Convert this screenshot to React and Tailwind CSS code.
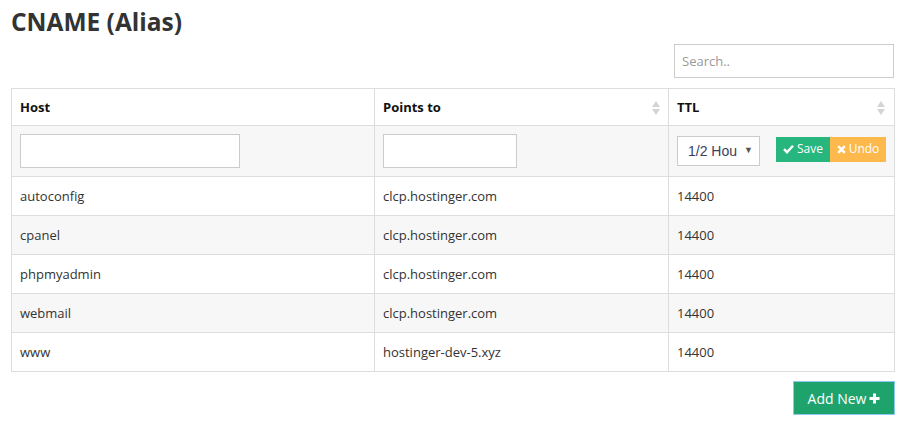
import React from "react";

const rows = [
  ["autoconfig", "clcp.hostinger.com", "14400"],
  ["cpanel", "clcp.hostinger.com", "14400"],
  ["phpmyadmin", "clcp.hostinger.com", "14400"],
  ["webmail", "clcp.hostinger.com", "14400"],
  ["www", "hostinger-dev-5.xyz", "14400"],
];

function SortIcon() {
  return (
    <svg width="8" height="14" viewBox="0 0 8 14" className="shrink-0">
      <path d="M4 0 L8 6 L0 6 Z" fill="#d4d4d4" />
      <path d="M4 14 L8 8 L0 8 Z" fill="#d4d4d4" />
    </svg>
  );
}

export default function App() {
  return (
    <div
      className="w-[906px] h-[426px] bg-white pl-[11px] pr-[12px] text-[#333]"
      style={{ fontFamily: '"Open Sans", sans-serif' }}
    >
      <h1 className="pt-[9px] text-[24.5px] leading-[26px] font-bold text-[#333]">CNAME (Alias)</h1>
      <div className="flex justify-end mt-[9px]">
        <input
          placeholder="Search.."
          className="w-[220px] h-[34px] border border-[#ccc] px-[7px] text-[13px] text-[#555] placeholder-[#999] outline-none"
          style={{ fontFamily: '"Open Sans", sans-serif' }}
        />
      </div>
      <table className="mt-[10px] w-[883px] border-collapse table-fixed text-[13px]">
        <colgroup>
          <col className="w-[363px]" />
          <col className="w-[294px]" />
          <col className="w-[226px]" />
        </colgroup>
        <thead>
          <tr className="h-[37px]">
            <th className="border border-[#ddd] px-[8px] pt-[1px] text-left font-bold text-[#111]">Host</th>
            <th className="border border-[#ddd] px-[8px] pt-[1px] text-left font-bold text-[#111]">
              <div className="flex items-center justify-between">
                <span>Points to</span>
                <SortIcon />
              </div>
            </th>
            <th className="border border-[#ddd] px-[8px] pt-[1px] text-left font-bold text-[#111]">
              <div className="flex items-center justify-between pr-[1px]">
                <span>TTL</span>
                <SortIcon />
              </div>
            </th>
          </tr>
        </thead>
        <tbody>
          <tr className="h-[51px] bg-[#f7f7f7]">
            <td className="border border-[#ddd] px-[8px]">
              <input className="block w-[220px] h-[34px] border border-[#ccc] bg-white outline-none" />
            </td>
            <td className="border border-[#ddd] px-[8px]">
              <input className="block w-[134px] h-[34px] border border-[#ccc] bg-white outline-none" />
            </td>
            <td className="border border-[#ddd] px-[8px]">
              <div className="flex items-center">
                <div
                  className="w-[83px] h-[30px] border border-[#ccc] bg-white flex items-center justify-between pl-[10px] pr-[6px] text-[14px] text-[#3b3f5c]"
                  style={{ fontFamily: '"Liberation Sans", Arial, sans-serif' }}
                >
                  <span>1/2 Hou</span>
                  <span className="text-[9px] text-[#555]">▼</span>
                </div>
                <div className="flex ml-[16px] -mt-[4px]">
                  <button className="h-[25px] w-[54px] bg-[#27b67d] text-white text-[12px] flex items-center justify-center gap-[3px]">
                    <svg width="11" height="10" viewBox="0 0 11 10">
                      <path d="M1 5.2 L4 8.2 L10 1.8" stroke="white" strokeWidth="2.4" fill="none" />
                    </svg>
                    Save
                  </button>
                  <button className="h-[25px] w-[56px] bg-[#fdb94c] text-white text-[12px] flex items-center justify-center gap-[3px]">
                    <svg width="9" height="9" viewBox="0 0 9 9">
                      <path d="M1.2 1.2 L7.8 7.8 M7.8 1.2 L1.2 7.8" stroke="white" strokeWidth="2.4" />
                    </svg>
                    Undo
                  </button>
                </div>
              </div>
            </td>
          </tr>
          {rows.map((r, i) => (
            <tr key={r[0]} className={`h-[39px] ${i % 2 === 1 ? "bg-[#f7f7f7]" : "bg-white"}`}>
              <td className="border border-[#ddd] px-[8px] pt-[1px] text-[#333]">{r[0]}</td>
              <td className="border border-[#ddd] px-[8px] pt-[1px] text-[#333]">{r[1]}</td>
              <td className="border border-[#ddd] px-[8px] pt-[1px] text-[#333]">{r[2]}</td>
            </tr>
          ))}
        </tbody>
      </table>
      <div className="flex justify-end mt-[9px] -mr-[1px]">
        <button className="w-[102px] h-[34px] bg-[#1fa36d] border border-[#8ec9f0] text-white text-[14px] flex items-center justify-center gap-[3px]">
          Add New
          <svg width="11" height="11" viewBox="0 0 11 11">
            <path d="M5.5 0.5 V10.5 M0.5 5.5 H10.5" stroke="white" strokeWidth="3" />
          </svg>
        </button>
      </div>
    </div>
  );
}
